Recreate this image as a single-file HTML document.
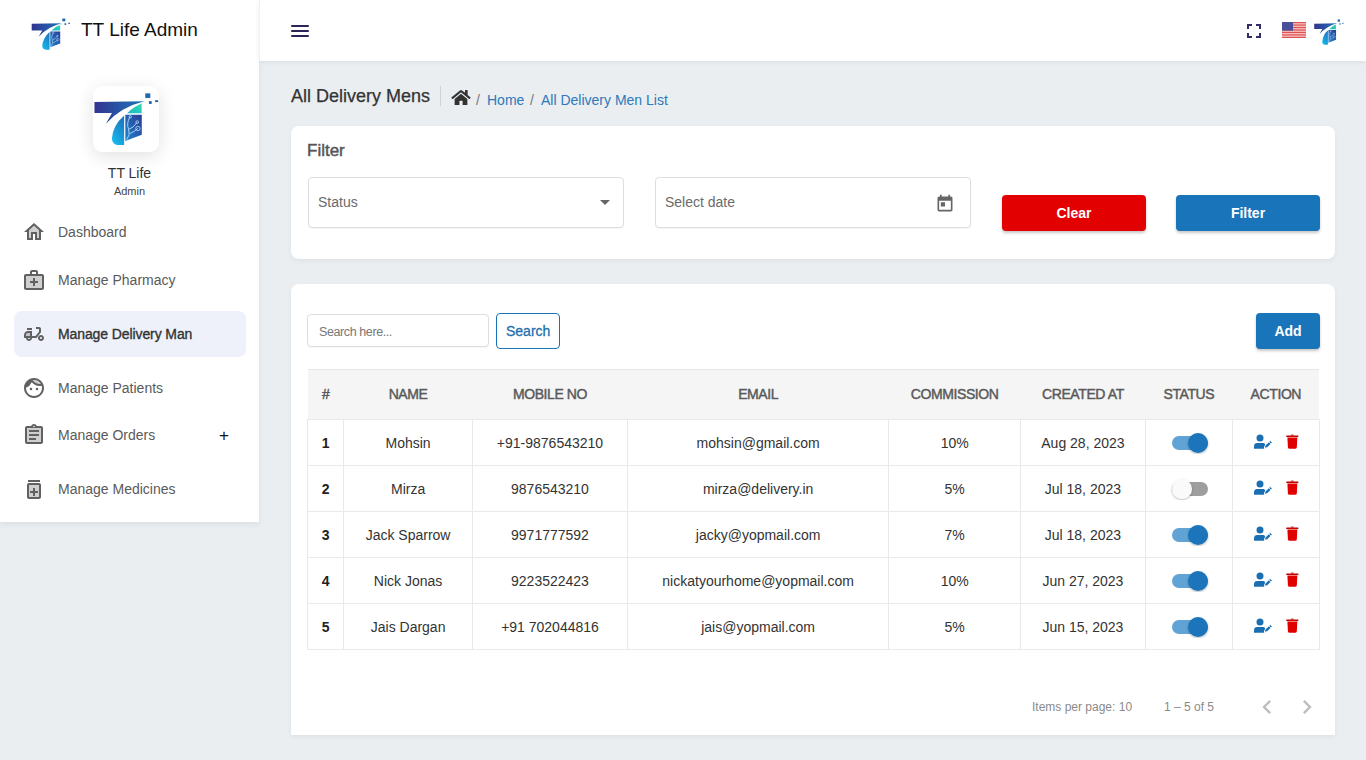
<!DOCTYPE html>
<html><head><meta charset="utf-8">
<style>
*{box-sizing:border-box;margin:0;padding:0}
html,body{width:1366px;height:760px;overflow:hidden}
body{background:#eaeef0;font-family:"Liberation Sans",sans-serif;position:relative;color:#333}
.abs{position:absolute}
.t{position:absolute;white-space:nowrap;line-height:1}
svg{display:block}
#side{position:absolute;left:0;top:0;width:259px;height:522px;background:#fff;box-shadow:0 2px 6px rgba(0,0,0,.07)}
#hdr{position:absolute;left:259px;top:0;width:1107px;height:61px;background:#fff;border-left:1px solid #f1f1f1;box-shadow:0 1px 5px rgba(0,0,0,.07)}
.nav{position:absolute;left:0;width:259px}
.nav .ic{position:absolute;left:22px;width:24px;height:24px;fill:#616161}
.nav .lb{position:absolute;left:58px;font-size:14px;color:#5a5a5a;white-space:nowrap;line-height:1}
.card{position:absolute;left:291px;width:1044px;background:#fff;border-radius:8px;box-shadow:0 2px 5px rgba(0,0,0,.05)}
.inp{position:absolute;border:1px solid #dedede;border-radius:4px;background:#fff;box-shadow:0 1px 1px rgba(0,0,0,.04)}
.btn{position:absolute;border-radius:4px;color:#fff;font-weight:bold;font-size:14px;text-align:center;box-shadow:0 2px 3px rgba(0,0,0,.22)}
table{position:absolute;left:307px;top:369px;width:1012px;table-layout:fixed;border-collapse:collapse;font-size:14px}
th{height:50px;padding-bottom:1px;background:#f5f5f5;color:#5a5a5a;font-weight:normal;-webkit-text-stroke:0.45px #5a5a5a;letter-spacing:-0.4px;text-transform:uppercase;border-top:1px solid #e6e6e6;font-size:14px}
td{height:46px;border:1px solid #e9e9e9;text-align:center;color:#333}
td:first-child{font-weight:bold;color:#222}
</style></head><body>

<svg width="0" height="0" style="position:absolute">
<defs>
<linearGradient id="gBar" x1="0" y1="0" x2="1" y2="0"><stop offset="0" stop-color="#33348f"/><stop offset="1" stop-color="#1b77bd"/></linearGradient>
<linearGradient id="gTeal" x1="0" y1="1" x2="1" y2="0"><stop offset="0" stop-color="#18b5c8"/><stop offset="1" stop-color="#38e8a6"/></linearGradient>
<linearGradient id="gCyan" x1="0" y1="1" x2="0.6" y2="0"><stop offset="0" stop-color="#17c0ef"/><stop offset="1" stop-color="#1a7ac3"/></linearGradient>
<linearGradient id="gRect" x1="0" y1="1" x2="1" y2="0"><stop offset="0" stop-color="#1d86cf"/><stop offset="1" stop-color="#2b3a95"/></linearGradient>
<filter id="ksh" x="-50%" y="-50%" width="200%" height="200%"><feDropShadow dx="0" dy="1" stdDeviation="1" flood-opacity=".3"/></filter>
<symbol id="logo" viewBox="40 90 710 580">
<path d="M45 195 L590 186 Q330 250 170 432 L236 315 L45 315 Z" fill="url(#gBar)"/>
<path d="M402 318 Q480 236 606 192 L560 210 L560 318 Z" fill="url(#gTeal)"/>
<path d="M369 342 Q246 450 236 590 Q238 660 300 664 L369 664 Z" fill="url(#gCyan)"/>
<path d="M382 333 L562 333 L562 552 L382 620 Z" fill="url(#gRect)"/>
<path d="M432 358 Q392 430 418 492 Q440 550 398 606 M420 492 Q470 480 510 418 M430 540 Q480 520 520 482" stroke="#bfe6ff" stroke-width="9" fill="none"/>
<circle cx="436" cy="356" r="13" fill="none" stroke="#bfe6ff" stroke-width="8"/>
<circle cx="512" cy="414" r="15" fill="none" stroke="#bfe6ff" stroke-width="8"/>
<circle cx="520" cy="484" r="24" fill="none" stroke="#bfe6ff" stroke-width="8"/>
<rect x="600" y="100" width="55" height="50" fill="#1d6aad"/>
<rect x="640" y="185" width="30" height="30" fill="#1d5fa8"/>
<rect x="708" y="175" width="32" height="20" fill="#1a5fa0"/>
</symbol>
</defs>
</svg>

<!-- SIDEBAR -->
<div id="side">
  <svg class="abs" style="left:31px;top:18px" width="40" height="32"><use href="#logo"/></svg>
  <div class="t" style="left:81px;top:20px;font-size:19px;color:#111">TT Life Admin</div>

  <div class="abs" style="left:93px;top:86px;width:66px;height:66px;background:#fff;border-radius:9px;box-shadow:0 4px 18px rgba(0,0,0,.12)">
    <svg class="abs" style="left:1px;top:6px" width="65" height="54"><use href="#logo"/></svg>
  </div>
  <div class="t" style="left:0;width:259px;text-align:center;top:166px;font-size:14px;color:#333">TT Life</div>
  <div class="t" style="left:0;width:259px;text-align:center;top:186px;font-size:11px;color:#444">Admin</div>

  <!-- nav -->
  <div class="nav" style="top:220px">
    <svg class="ic" style="top:0" viewBox="0 0 24 24"><path d="M12 5.69l5 4.5V18h-2v-6H9v6H7v-7.81l5-4.5M12 3L2 12h3v8h6v-6h2v6h6v-8h3L12 3z"/><path d="M7 10.19V18h2v-6h6v6h2v-7.81l-5-4.5z" opacity=".3"/></svg>
    <div class="lb" style="top:5px">Dashboard</div>
  </div>
  <div class="nav" style="top:268px">
    <svg class="ic" style="top:0" viewBox="0 0 24 24"><path d="M16 8H4v12h16V8h-4zm0 7h-3v3h-2v-3H8v-2h3v-3h2v3h3v2z" opacity=".3"/><path d="M20 6h-4V4c0-1.1-.9-2-2-2h-4c-1.1 0-2 .9-2 2v2H4c-1.1 0-2 .9-2 2v12c0 1.1.9 2 2 2h16c1.1 0 2-.9 2-2V8c0-1.1-.9-2-2-2zM10 4h4v2h-4V4zm10 16H4V8h16v12z"/><path d="M13 10h-2v3H8v2h3v3h2v-3h3v-2h-3z"/></svg>
    <div class="lb" style="top:5px">Manage Pharmacy</div>
  </div>
  <div class="abs" style="left:14px;top:311px;width:232px;height:46px;background:#eef1f9;border-radius:8px"></div>
  <div class="nav" style="top:322px">
    <svg class="ic" style="top:0" viewBox="0 0 24 24"><path d="M19 7c0-1.1-.9-2-2-2h-3v2h3v2.65L13.52 14H10V9H6c-2.21 0-4 1.79-4 4v3h2c0 1.66 1.34 3 3 3s3-1.34 3-3h4.48L19 10.35V7zM4 14v-1c0-1.1.9-2 2-2h2v3H4zm3 3c-.55 0-1-.45-1-1h2c0 .55-.45 1-1 1z"/><path d="M5 6h5v2H5zm14 7c-1.66 0-3 1.34-3 3s1.34 3 3 3 3-1.34 3-3-1.34-3-3-3zm0 4c-.55 0-1-.45-1-1s.45-1 1-1 1 .45 1 1-.45 1-1 1z"/><path d="M4 14h4v-3H6c-1.1 0-2 .9-2 2v1z" opacity=".3"/></svg>
    <div class="lb" style="top:5px;color:#333;-webkit-text-stroke:0.35px #333;letter-spacing:-0.1px">Manage Delivery Man</div>
  </div>
  <div class="nav" style="top:376px">
    <svg class="ic" style="top:0" viewBox="0 0 24 24"><path d="M17.5 8c-2.9 0-5.44-1.56-6.84-3.88C11.09 4.05 11.54 4 12 4c2.9 0 5.44 1.56 6.84 3.88-.43.07-.88.12-1.34.12z" opacity=".3"/><path d="M10.25 13a1.25 1.25 0 1 1-2.5 0 1.25 1.25 0 0 1 2.5 0zM15 11.75a1.25 1.25 0 1 0 0 2.5 1.25 1.25 0 0 0 0-2.5zm7 .25c0 5.52-4.48 10-10 10S2 17.52 2 12 6.48 2 12 2s10 4.48 10 10zM10.66 4.12C12.06 6.44 14.6 8 17.5 8c.46 0 .91-.05 1.34-.12C17.44 5.56 14.9 4 12 4c-.46 0-.91.05-1.34.12zM20 12c0-.78-.12-1.53-.33-2.24-.7.15-1.42.24-2.17.24a10 10 0 0 1-7.76-3.69A10.016 10.016 0 0 1 4 11.86c.01.04 0 .09 0 .14 0 4.41 3.59 8 8 8s8-3.59 8-8z"/></svg>
    <div class="lb" style="top:5px">Manage Patients</div>
  </div>
  <div class="nav" style="top:423px">
    <svg class="ic" style="top:0" viewBox="0 0 24 24"><path d="M5 5v14h14V5H5zm9 12H7v-2h7v2zm3-4H7v-2h10v2zm0-4H7V7h10v2z" opacity=".3"/><path d="M7 15h7v2H7zm0-4h10v2H7zm0-4h10v2H7zm12-4h-4.18C14.4 1.84 13.3 1 12 1c-1.3 0-2.4.84-2.82 2H5c-1.1 0-2 .9-2 2v14c0 1.1.9 2 2 2h14c1.1 0 2-.9 2-2V5c0-1.1-.9-2-2-2zm-7-.25c.41 0 .75.34.75.75s-.34.75-.75.75-.75-.34-.75-.75.34-.75.75-.75zM19 19H5V5h14v14z"/></svg>
    <div class="lb" style="top:5px">Manage Orders</div>
    <div class="t" style="left:219px;top:4px;font-size:17px;color:#111">+</div>
  </div>
  <div class="nav" style="top:477px">
    <svg class="ic" style="top:0" viewBox="0 0 24 24"><path d="M6 8h12v12H6z" opacity=".3"/><path d="M6 3h12v2H6zm11 3H7c-1.1 0-2 .9-2 2v12c0 1.1.9 2 2 2h10c1.1 0 2-.9 2-2V8c0-1.1-.9-2-2-2zm0 14H7V8h10v12zm-6-1h2v-3h3v-2h-3V11h-2v3H8v2h3z"/></svg>
    <div class="lb" style="top:5px">Manage Medicines</div>
  </div>
</div>

<!-- HEADER -->
<div id="hdr">
  <div class="abs" style="left:31px;top:25px;width:18px;height:2px;background:#2a2458;border-radius:1px"></div>
  <div class="abs" style="left:31px;top:30px;width:18px;height:2px;background:#2a2458;border-radius:1px"></div>
  <div class="abs" style="left:31px;top:35px;width:18px;height:2px;background:#2a2458;border-radius:1px"></div>
  <svg class="abs" style="left:982px;top:19px;fill:#322e64" width="24" height="24" viewBox="0 0 24 24"><path d="M7 14H5v5h5v-2H7v-3zm-2-4h2V7h3V5H5v5zm12 7h-3v2h5v-5h-2v3zM14 5v2h3v3h2V5h-5z"/></svg>
  <svg class="abs" style="left:1022px;top:22px" width="24" height="16" viewBox="0 0 24 16">
    <rect width="24" height="16" fill="#f6c9c9"/>
    <g fill="#e05252"><rect y="0" width="24" height="1.25"/><rect y="2.46" width="24" height="1.25"/><rect y="4.92" width="24" height="1.25"/><rect y="7.38" width="24" height="1.25"/><rect y="9.84" width="24" height="1.25"/><rect y="12.3" width="24" height="1.25"/><rect y="14.76" width="24" height="1.24"/></g>
    <rect width="11" height="8.6" fill="#4a4f9a"/>
  </svg>
  <svg class="abs" style="left:1054px;top:19px" width="30" height="26" viewBox="40 90 710 580" preserveAspectRatio="none"><use href="#logo" width="710" height="580" x="40" y="90"/></svg>
</div>

<!-- TITLE / BREADCRUMB -->
<div class="t" style="left:291px;top:87px;font-size:18px;color:#333;-webkit-text-stroke:0.25px #333">All Delivery Mens</div>
<div class="abs" style="left:440px;top:86px;width:1px;height:20px;background:#cfd3d8"></div>
<svg class="abs" style="left:451px;top:89px;fill:#333" width="20" height="17" viewBox="0 0 576 512"><path d="M280.4 148.3L96 300.1V464a16 16 0 0 0 16 16l112.1-.3a16 16 0 0 0 15.9-16V368a16 16 0 0 1 16-16h64a16 16 0 0 1 16 16v95.6a16 16 0 0 0 16 16.1L464 480a16 16 0 0 0 16-16V300L295.7 148.3a12.2 12.2 0 0 0-15.3 0zM571.6 251.5L488 182.6V44.1a12 12 0 0 0-12-12h-56a12 12 0 0 0-12 12v72.6L318.5 43a48 48 0 0 0-61 0L4.3 251.5a12 12 0 0 0-1.6 16.9l25.5 31A12 12 0 0 0 45.2 301l235.2-193.7a12.2 12.2 0 0 1 15.3 0L530.9 301a12 12 0 0 0 16.9-1.6l25.5-31a12 12 0 0 0-1.7-16.9z"/></svg>
<div class="t" style="left:476px;top:93px;font-size:14px;color:#777">/</div>
<div class="t" style="left:487px;top:93px;font-size:14px;color:#2d79bb">Home</div>
<div class="t" style="left:530px;top:93px;font-size:14px;color:#777">/</div>
<div class="t" style="left:541px;top:93px;font-size:14px;color:#2d79bb">All Delivery Men List</div>

<!-- FILTER CARD -->
<div class="card" style="top:126px;height:133px"></div>
<div class="t" style="left:307px;top:142px;font-size:17px;color:#555;-webkit-text-stroke:0.45px #555">Filter</div>
<div class="inp" style="left:308px;top:177px;width:316px;height:51px"></div>
<div class="t" style="left:318px;top:195px;font-size:14px;color:#6b6b6b">Status</div>
<div class="abs" style="left:600px;top:200px;width:0;height:0;border-left:5px solid transparent;border-right:5px solid transparent;border-top:5px solid #666"></div>
<div class="inp" style="left:655px;top:177px;width:316px;height:51px"></div>
<div class="t" style="left:665px;top:195px;font-size:14px;color:#6b6b6b">Select date</div>
<svg class="abs" style="left:935px;top:194px;fill:#666" width="20" height="20" viewBox="0 0 24 24"><path d="M19 3h-1V1h-2v2H8V1H6v2H5c-1.11 0-1.99.9-1.99 2L3 19c0 1.1.89 2 2 2h14c1.1 0 2-.9 2-2V5c0-1.1-.9-2-2-2zm0 16H5V8h14v11zM7 10h5v5H7z"/></svg>
<div class="btn" style="left:1002px;top:195px;width:144px;height:36px;background:#e30000;line-height:36px">Clear</div>
<div class="btn" style="left:1176px;top:195px;width:144px;height:36px;background:#1a74ba;line-height:36px">Filter</div>

<!-- TABLE CARD -->
<div class="card" style="top:284px;height:451px;border-bottom-left-radius:0;border-bottom-right-radius:0"></div>
<div class="inp" style="left:307px;top:314px;width:182px;height:33px"></div>
<div class="t" style="left:319px;top:325.5px;font-size:12.5px;letter-spacing:-0.4px;color:#777">Search here...</div>
<div class="abs" style="left:496px;top:313px;width:64px;height:36px;border:1px solid #1a74ba;border-radius:4px"></div>
<div class="t" style="left:506px;top:324px;font-size:14px;color:#1f6fae;-webkit-text-stroke:0.3px #1f6fae">Search</div>
<div class="btn" style="left:1256px;top:313px;width:64px;height:36px;background:#1a74ba;line-height:36px">Add</div>

<table>
<colgroup><col style="width:36.2px"><col style="width:128.8px"><col style="width:155px"><col style="width:261.3px"><col style="width:131.8px"><col style="width:124.7px"><col style="width:87.2px"><col style="width:86.8px"></colgroup>
<tr><th>#</th><th>Name</th><th>Mobile No</th><th>Email</th><th>Commission</th><th>Created At</th><th>Status</th><th>Action</th></tr>
<tr><td>1</td><td>Mohsin</td><td>+91-9876543210</td><td>mohsin@gmail.com</td><td>10%</td><td>Aug 28, 2023</td><td><svg width="40" height="22" style="display:inline-block;vertical-align:middle;position:relative;left:1px" viewBox="0 0 40 22"><rect x="2" y="4" width="36" height="14" rx="7" fill="#62a3d6"/><circle cx="28" cy="11" r="10" fill="#1a74ba" filter="url(#ksh)"/></svg></td><td><svg width="47" height="16" style="display:inline-block;vertical-align:middle;position:relative;left:1px;top:-1px" viewBox="0 0 47 16"><circle cx="7" cy="4.1" r="3.5" fill="#1a6fb2"/><path d="M1 14.7V12.4Q1 9 4.4 9H11.2L12.2 10.8L11.2 14.7Z" fill="#1a6fb2"/><path d="M11.3 14.3L14.14 13.64L19.25 8.68L17.15 6.52L12.04 11.48Z" fill="#1a6fb2" stroke="#fff" stroke-width=".9" stroke-linejoin="round"/><path d="M18.1 10.1L15.5 7.6" stroke="#fff" stroke-width=".8"/><rect x="33.2" y="1.4" width="12.2" height="1.7" rx=".6" fill="#c40000"/><path d="M37.6 1.6Q37.8 .4 39.3 .4Q40.8 .4 41 1.6Z" fill="#c40000"/><path d="M34.4 3.6H44.3L43.8 13.6Q43.7 14.7 42.6 14.7H36.1Q35 14.7 34.9 13.6Z" fill="#e10000"/></svg></td></tr>
<tr><td>2</td><td>Mirza</td><td>9876543210</td><td>mirza@delivery.in</td><td>5%</td><td>Jul 18, 2023</td><td><svg width="40" height="22" style="display:inline-block;vertical-align:middle;position:relative;left:1px" viewBox="0 0 40 22"><rect x="2" y="4" width="36" height="14" rx="7" fill="#9e9e9e"/><circle cx="12" cy="11" r="10" fill="#fafafa" filter="url(#ksh)"/></svg></td><td><svg width="47" height="16" style="display:inline-block;vertical-align:middle;position:relative;left:1px;top:-1px" viewBox="0 0 47 16"><circle cx="7" cy="4.1" r="3.5" fill="#1a6fb2"/><path d="M1 14.7V12.4Q1 9 4.4 9H11.2L12.2 10.8L11.2 14.7Z" fill="#1a6fb2"/><path d="M11.3 14.3L14.14 13.64L19.25 8.68L17.15 6.52L12.04 11.48Z" fill="#1a6fb2" stroke="#fff" stroke-width=".9" stroke-linejoin="round"/><path d="M18.1 10.1L15.5 7.6" stroke="#fff" stroke-width=".8"/><rect x="33.2" y="1.4" width="12.2" height="1.7" rx=".6" fill="#c40000"/><path d="M37.6 1.6Q37.8 .4 39.3 .4Q40.8 .4 41 1.6Z" fill="#c40000"/><path d="M34.4 3.6H44.3L43.8 13.6Q43.7 14.7 42.6 14.7H36.1Q35 14.7 34.9 13.6Z" fill="#e10000"/></svg></td></tr>
<tr><td>3</td><td>Jack Sparrow</td><td>9971777592</td><td>jacky@yopmail.com</td><td>7%</td><td>Jul 18, 2023</td><td><svg width="40" height="22" style="display:inline-block;vertical-align:middle;position:relative;left:1px" viewBox="0 0 40 22"><rect x="2" y="4" width="36" height="14" rx="7" fill="#62a3d6"/><circle cx="28" cy="11" r="10" fill="#1a74ba" filter="url(#ksh)"/></svg></td><td><svg width="47" height="16" style="display:inline-block;vertical-align:middle;position:relative;left:1px;top:-1px" viewBox="0 0 47 16"><circle cx="7" cy="4.1" r="3.5" fill="#1a6fb2"/><path d="M1 14.7V12.4Q1 9 4.4 9H11.2L12.2 10.8L11.2 14.7Z" fill="#1a6fb2"/><path d="M11.3 14.3L14.14 13.64L19.25 8.68L17.15 6.52L12.04 11.48Z" fill="#1a6fb2" stroke="#fff" stroke-width=".9" stroke-linejoin="round"/><path d="M18.1 10.1L15.5 7.6" stroke="#fff" stroke-width=".8"/><rect x="33.2" y="1.4" width="12.2" height="1.7" rx=".6" fill="#c40000"/><path d="M37.6 1.6Q37.8 .4 39.3 .4Q40.8 .4 41 1.6Z" fill="#c40000"/><path d="M34.4 3.6H44.3L43.8 13.6Q43.7 14.7 42.6 14.7H36.1Q35 14.7 34.9 13.6Z" fill="#e10000"/></svg></td></tr>
<tr><td>4</td><td>Nick Jonas</td><td>9223522423</td><td>nickatyourhome@yopmail.com</td><td>10%</td><td>Jun 27, 2023</td><td><svg width="40" height="22" style="display:inline-block;vertical-align:middle;position:relative;left:1px" viewBox="0 0 40 22"><rect x="2" y="4" width="36" height="14" rx="7" fill="#62a3d6"/><circle cx="28" cy="11" r="10" fill="#1a74ba" filter="url(#ksh)"/></svg></td><td><svg width="47" height="16" style="display:inline-block;vertical-align:middle;position:relative;left:1px;top:-1px" viewBox="0 0 47 16"><circle cx="7" cy="4.1" r="3.5" fill="#1a6fb2"/><path d="M1 14.7V12.4Q1 9 4.4 9H11.2L12.2 10.8L11.2 14.7Z" fill="#1a6fb2"/><path d="M11.3 14.3L14.14 13.64L19.25 8.68L17.15 6.52L12.04 11.48Z" fill="#1a6fb2" stroke="#fff" stroke-width=".9" stroke-linejoin="round"/><path d="M18.1 10.1L15.5 7.6" stroke="#fff" stroke-width=".8"/><rect x="33.2" y="1.4" width="12.2" height="1.7" rx=".6" fill="#c40000"/><path d="M37.6 1.6Q37.8 .4 39.3 .4Q40.8 .4 41 1.6Z" fill="#c40000"/><path d="M34.4 3.6H44.3L43.8 13.6Q43.7 14.7 42.6 14.7H36.1Q35 14.7 34.9 13.6Z" fill="#e10000"/></svg></td></tr>
<tr><td>5</td><td>Jais Dargan</td><td>+91 702044816</td><td>jais@yopmail.com</td><td>5%</td><td>Jun 15, 2023</td><td><svg width="40" height="22" style="display:inline-block;vertical-align:middle;position:relative;left:1px" viewBox="0 0 40 22"><rect x="2" y="4" width="36" height="14" rx="7" fill="#62a3d6"/><circle cx="28" cy="11" r="10" fill="#1a74ba" filter="url(#ksh)"/></svg></td><td><svg width="47" height="16" style="display:inline-block;vertical-align:middle;position:relative;left:1px;top:-1px" viewBox="0 0 47 16"><circle cx="7" cy="4.1" r="3.5" fill="#1a6fb2"/><path d="M1 14.7V12.4Q1 9 4.4 9H11.2L12.2 10.8L11.2 14.7Z" fill="#1a6fb2"/><path d="M11.3 14.3L14.14 13.64L19.25 8.68L17.15 6.52L12.04 11.48Z" fill="#1a6fb2" stroke="#fff" stroke-width=".9" stroke-linejoin="round"/><path d="M18.1 10.1L15.5 7.6" stroke="#fff" stroke-width=".8"/><rect x="33.2" y="1.4" width="12.2" height="1.7" rx=".6" fill="#c40000"/><path d="M37.6 1.6Q37.8 .4 39.3 .4Q40.8 .4 41 1.6Z" fill="#c40000"/><path d="M34.4 3.6H44.3L43.8 13.6Q43.7 14.7 42.6 14.7H36.1Q35 14.7 34.9 13.6Z" fill="#e10000"/></svg></td></tr>
</table>

<div class="t" style="left:1032px;top:701px;font-size:12px;color:#8a8a8a">Items per page: 10</div>
<div class="t" style="left:1164px;top:701px;font-size:12px;color:#8a8a8a">1 – 5 of 5</div>
<svg class="abs" style="left:1253px;top:693px;fill:#bdbdbd" width="28" height="28" viewBox="0 0 24 24"><path d="M15.41 7.41L14 6l-6 6 6 6 1.41-1.41L10.83 12z"/></svg>
<svg class="abs" style="left:1293px;top:693px;fill:#bdbdbd" width="28" height="28" viewBox="0 0 24 24"><path d="M10 6L8.59 7.41 13.17 12l-4.58 4.59L10 18l6-6z"/></svg>

</body></html>
